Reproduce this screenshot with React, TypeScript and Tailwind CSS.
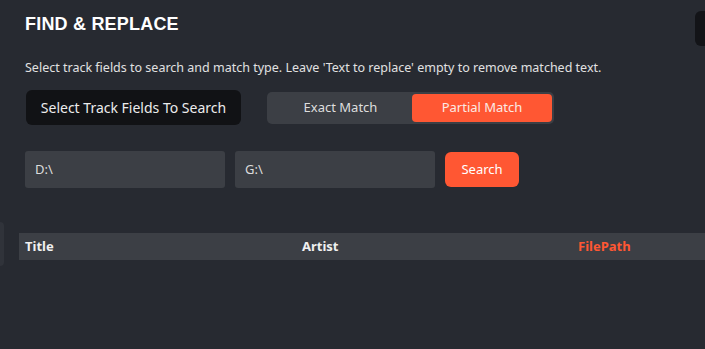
export default function App() {
  return (
    <div className="w-[705px] h-[349px] overflow-hidden bg-[#272a31] text-[#e6e6e6] font-['Noto_Sans',sans-serif]">
      <div className="flex items-start pl-[25px] pt-[11px]">
        <h1 className="mt-[2px] font-['Liberation_Sans',sans-serif] text-[18px] font-bold leading-[22px] tracking-[0.2px] text-white">
          FIND &amp; REPLACE
        </h1>
        <div className="ml-auto mr-[-60px] h-[35px] w-[70px] rounded-[6px] bg-[#131418]" />
      </div>

      <p className="pl-[25px] mt-[13px] text-[12.5px] leading-[18px] text-[#e1e1e1]">
        Select track fields to search and match type. Leave 'Text to replace' empty to remove matched text.
      </p>

      <div className="mt-[13px] flex items-center pl-[26px]">
        <button className="h-[35px] w-[215px] rounded-[6px] bg-[#111215] text-[14px] text-[#ececec]">
          Select Track Fields To Search
        </button>
        <div className="ml-[26px] flex h-[32px] w-[287px] items-center rounded-[5px] bg-[#3c3f45] p-[2px]">
          <button className="h-full w-[143px] text-[13px] text-[#dedede]">Exact Match</button>
          <button className="h-full w-[140px] rounded-[4px] bg-[#ff5733] text-[13px] text-[#fbe9e4]">
            Partial Match
          </button>
        </div>
      </div>

      <div className="mt-[26px] flex items-center gap-[10px] pl-[25px]">
        <div className="flex h-[37px] w-[200px] items-center rounded-[3px] bg-[#3c3f45] px-[10px] text-[13px] text-[#dcdcdc]">
          D:\
        </div>
        <div className="flex h-[37px] w-[200px] items-center rounded-[3px] bg-[#3c3f45] px-[10px] text-[13px] text-[#dcdcdc]">
          G:\
        </div>
        <button className="h-[35px] w-[74px] rounded-[6px] bg-[#ff5733] text-[13px] text-white">Search</button>
      </div>

      <div className="mt-[45px] flex items-start">
        <div className="h-[44px] w-[4px] -mt-[11px] rounded-r-[4px] bg-[#30333a]" />
        <div className="ml-[15px] flex h-[27px] flex-1 items-center bg-[#3c3f45] text-[13px] font-bold">
          <span className="w-[283px] pl-[6px] text-[#f0f0f0]">Title</span>
          <span className="w-[276px] text-[#f0f0f0]">Artist</span>
          <span className="text-[#ff5733]">FilePath</span>
        </div>
      </div>
    </div>
  );
}
